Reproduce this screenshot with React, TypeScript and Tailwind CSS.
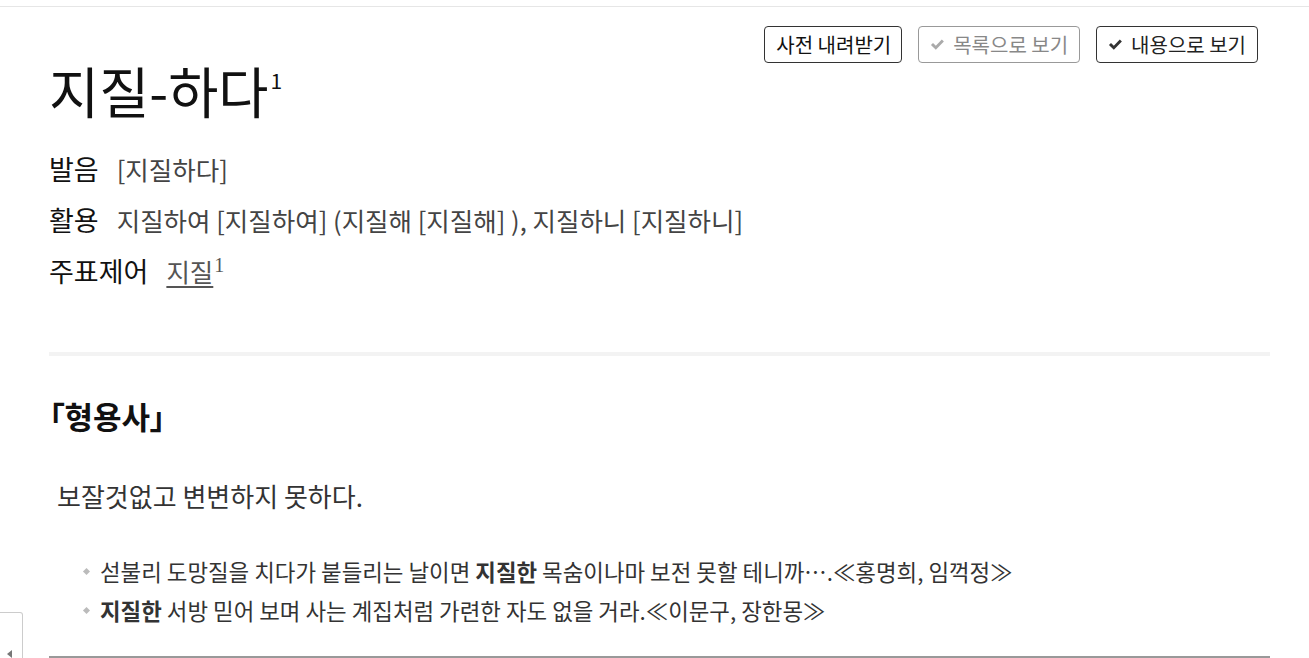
import React from "react";

const KR = "font-['Noto_Sans_CJK_KR','Noto_Sans',sans-serif]";

function Check({ className }: { className?: string }) {
  return (
    <svg viewBox="0 0 16 16" className={className} fill="currentColor">
      <path d="M1 8.6l2.2-2.2 3 2.8 6.4-6.6 2.2 2.2-8.6 8.8z" />
    </svg>
  );
}

function Row({ label, children }: { label: string; children: React.ReactNode }) {
  return (
    <div className="flex items-baseline h-[51px] leading-[51px]">
      <span className="text-[27px] text-[#111] mr-[18px]">{label}</span>
      <span className="text-[25.5px] text-[#444]">{children}</span>
    </div>
  );
}

function Example({ children }: { children: React.ReactNode }) {
  return (
    <li className="flex items-center h-[39px] text-[22.4px] text-[#333]">
      <span className="w-[5px] h-[5px] bg-[#bbb] rotate-45 ml-[35px] mr-[11px] shrink-0" />
      <span>{children}</span>
    </li>
  );
}

export default function App() {
  return (
    <div className={`${KR} relative bg-white h-[658px] overflow-hidden`}>
      <div className="h-[6px]" />
      <div className="h-px bg-[#e6e6e6]" />

      <div className="px-[49px] pr-[39px]">
        <div className="flex justify-end gap-4 pr-3 mt-[19px] text-[20px]">
          <button className="h-[37px] pl-[11px] pr-[10px] border border-[#333] rounded-[4px] text-[#111] bg-white">
            사전 내려받기
          </button>
          <button className="h-[37px] pl-[11px] pr-[11px] border border-[#999] rounded-[4px] text-[#888] bg-white flex items-center gap-[8px]">
            <Check className="w-[15px] h-[15px] text-[#aaa]" />
            목록으로 보기
          </button>
          <button className="h-[37px] pl-[11px] pr-[11px] border border-[#333] rounded-[4px] text-[#222] bg-white flex items-center gap-[8px]">
            <Check className="w-[15px] h-[15px] text-[#333]" />
            내용으로 보기
          </button>
        </div>

        <h1 className="text-[54.5px] leading-[60px] text-[#111] flex items-start -mt-[3px]">
          지질-하다
          <span className="text-[21px] leading-none mt-[10px] ml-[2px]">1</span>
        </h1>

        <div className="mt-[23px]">
          <Row label="발음">[지질하다]</Row>
          <Row label="활용">
            지질하여 [지질하여] (지질해 [지질해] ), 지질하니 [지질하니]
          </Row>
          <Row label="주표제어">
            <span className="underline underline-offset-4 text-[#555]">지질</span>
            <sup className="font-['Liberation_Serif',serif] text-[20px] text-[#555] ml-[1px]">1</sup>
          </Row>
        </div>

        <div className="h-[4px] bg-[#f3f3f3] mt-[56px]" />

        <h2 className="text-[31px] leading-[40px] font-bold text-[#111] mt-[40px] [font-feature-settings:'palt']">
          「형용사」
        </h2>

        <p className="text-[26px] leading-[40px] text-[#333] mt-[40px] pl-[8px]">보잘것없고 변변하지 못하다.</p>

        <ul className="mt-[36px]">
          <Example>
            섣불리 도망질을 치다가 붙들리는 날이면 <b>지질한</b> 목숨이나마 보전 못할 테니까….≪홍명희, 임꺽정≫
          </Example>
          <Example>
            <b>지질한</b> 서방 믿어 보며 사는 계집처럼 가련한 자도 없을 거라.≪이문구, 장한몽≫
          </Example>
        </ul>

        <div className="h-[2px] bg-[#999] mt-[26px]" />
      </div>

      <div className="absolute left-0 top-[612px] w-[23px] h-[60px] border border-l-0 border-[#ccc] rounded-tr-[3px] bg-white">
        <div className="absolute left-[7px] top-[37px] w-0 h-0 border-y-[4px] border-y-transparent border-r-[5px] border-r-[#777]" />
      </div>
    </div>
  );
}
